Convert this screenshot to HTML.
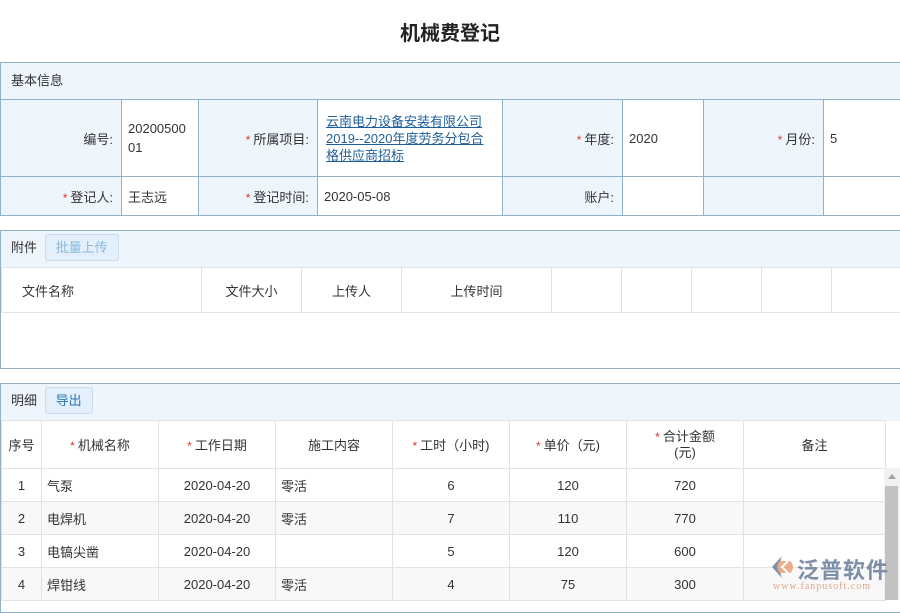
<!DOCTYPE html>
<html><head><meta charset="utf-8"><style>
*{box-sizing:border-box;margin:0;padding:0}
body{width:900px;height:600px;overflow:hidden;background:#fff;font-family:"Liberation Sans","Noto Sans CJK SC",sans-serif;font-size:13px;color:#333;position:relative}
.a{position:absolute}
.title{left:0;width:900px;top:17px;text-align:center;font-size:20px;font-weight:bold;color:#222}
.st{color:#d33;margin-right:3px;font-size:12px}
table{border-collapse:collapse;position:absolute}
td{padding:0}
.f td{border:1px solid #8fb2c9}
.lb{background:#eef5fd;text-align:right;padding-right:8px}
.vl{padding-left:6px;background:#fff}
.hd{background:#eef5fd}
a{color:#1f5f9b;text-decoration:underline}
.g td{border:1px solid #e2e2e2}
.btn{border:1px solid #c8dcee;border-radius:3px;background:#e3f0fb;padding:0 10px;height:27px;line-height:25px;display:inline-block}
</style></head><body>
<div class="a title">机械费登记</div>

<table class="f" style="left:0;top:62px;width:901px">
<tr style="height:37px"><td colspan="8" class="hd" style="padding-left:10px;padding-bottom:4px">基本信息</td></tr>
<tr style="height:77px">
<td class="lb" style="width:121px">编号:</td>
<td class="vl" style="width:77px;line-height:19px">20200500<br>01</td>
<td class="lb" style="width:119px"><span class="st">*</span>所属项目:</td>
<td class="vl" style="width:185px;line-height:17px;padding-left:8px"><div style="width:160px"><a>云南电力设备安装有限公司2019--2020年度劳务分包合格供应商招标</a></div></td>
<td class="lb" style="width:120px"><span class="st">*</span>年度:</td>
<td class="vl" style="width:81px">2020</td>
<td class="lb" style="width:120px"><span class="st">*</span>月份:</td>
<td class="vl">5</td></tr>
<tr style="height:39px">
<td class="lb"><span class="st">*</span>登记人:</td>
<td class="vl">王志远</td>
<td class="lb"><span class="st">*</span>登记时间:</td>
<td class="vl">2020-05-08</td>
<td class="lb">账户:</td>
<td class="vl"></td>
<td class="lb"></td>
<td class="vl"></td></tr>
</table>

<div class="a" style="left:0;top:230px;width:901px;height:139px;border:1px solid #8fb2c9">
<div style="height:37px;background:#eef5fd;border-bottom:1px solid #e2e2e2;padding-left:10px;line-height:33px">附件 <span class="btn" style="color:#8ab9dd;margin-left:4px;line-height:25px">批量上传</span></div>
</div>
<table class="g" style="left:1px;top:267px;width:900px">
<tr style="height:45px"><td style="width:200px;padding-left:20px">文件名称</td><td style="width:100px;text-align:center">文件大小</td><td style="width:100px;text-align:center">上传人</td><td style="width:150px;text-align:center">上传时间</td><td style="width:70px"></td><td style="width:70px"></td><td style="width:70px"></td><td style="width:70px"></td><td></td></tr>
</table>

<div class="a" style="left:0;top:383px;width:901px;height:230px;border:1px solid #8fb2c9">
<div style="height:37px;background:#eef5fd;padding-left:10px;line-height:33px">明细 <span class="btn" style="color:#2a78b8;margin-left:4px">导出</span></div>
</div>
<table class="g" style="left:1px;top:420px;width:885px;text-align:center">
<tr style="height:48px"><td style="width:40px">序号</td><td style="width:117px"><span class="st">*</span>机械名称</td><td style="width:117px"><span class="st">*</span>工作日期</td><td style="width:117px">施工内容</td><td style="width:117px"><span class="st">*</span>工时（小时)</td><td style="width:117px"><span class="st">*</span>单价（元)</td><td style="width:117px;line-height:16px"><span class="st">*</span>合计金额<br>(元)</td><td>备注</td></tr>
<tr style="height:33px"><td>1</td><td style="text-align:left;padding-left:5px">气泵</td><td>2020-04-20</td><td style="text-align:left;padding-left:5px">零活</td><td>6</td><td>120</td><td>720</td><td></td></tr>
<tr style="height:33px;background:#f8f8f8"><td>2</td><td style="text-align:left;padding-left:5px">电焊机</td><td>2020-04-20</td><td style="text-align:left;padding-left:5px">零活</td><td>7</td><td>110</td><td>770</td><td></td></tr>
<tr style="height:33px"><td>3</td><td style="text-align:left;padding-left:5px">电镐尖凿</td><td>2020-04-20</td><td></td><td>5</td><td>120</td><td>600</td><td></td></tr>
<tr style="height:33px;background:#f8f8f8"><td>4</td><td style="text-align:left;padding-left:5px">焊钳线</td><td>2020-04-20</td><td style="text-align:left;padding-left:5px">零活</td><td>4</td><td>75</td><td>300</td><td></td></tr>
</table>
<div class="a" style="left:884px;top:468px;width:16px;height:132px;background:#f1f1f1"></div>
<div class="a" style="left:888px;top:474px;width:0;height:0;border-left:4px solid transparent;border-right:4px solid transparent;border-bottom:5px solid #a3a3a3"></div>
<div class="a" style="left:885px;top:486px;width:13px;height:114px;background:#c1c1c1"></div>

<svg class="a" style="left:768px;top:554px" width="28" height="26" viewBox="0 0 28 26"><path d="M14 2 L4 13 L14 24 L10 13 Z" fill="#7d8ea8"/><circle cx="17" cy="13" r="8" fill="#e8a07a" opacity=".85"/><path d="M13 6 L21 6 L14 13 L21 20 L13 20" fill="none" stroke="#fff" stroke-width="2"/></svg>
<div class="a" style="left:797px;top:553px;font-size:22px;color:#7d8ea8;font-weight:bold;letter-spacing:1px">泛普软件</div>
<div class="a" style="left:773px;top:581px;font-size:10px;color:#e0a888;font-family:'Liberation Serif',serif;letter-spacing:1px">www.fanpusoft.com</div>
</body></html>
